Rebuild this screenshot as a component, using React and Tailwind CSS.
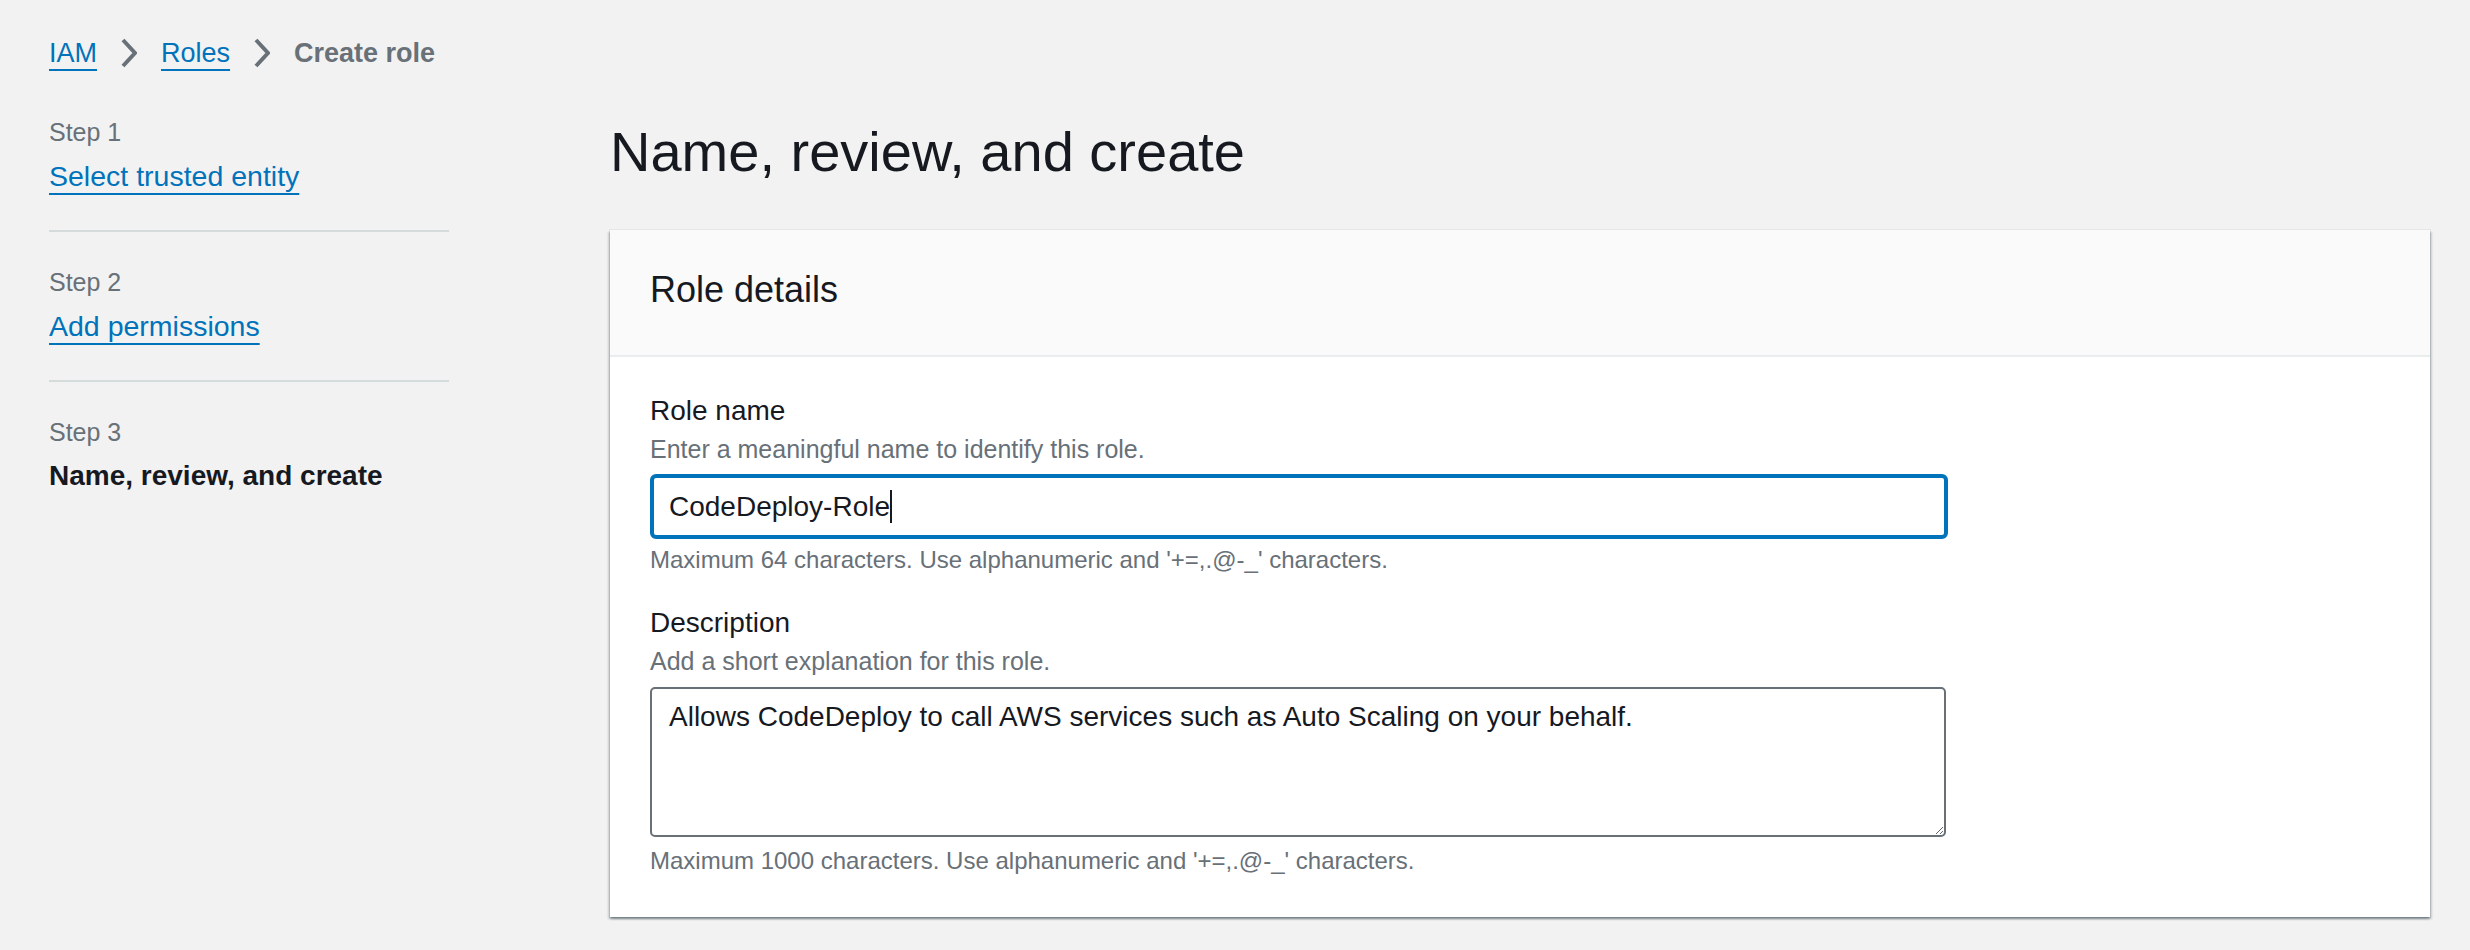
import React from 'react';

const Chevron = () => (
  <svg width="16" height="32" viewBox="0 0 16 32" className="shrink-0">
    <polyline points="2,3 14,16 2,29" fill="none" stroke="#687078" strokeWidth="4" />
  </svg>
);

const steps = [
  { label: 'Step 1', title: 'Select trusted entity', done: true },
  { label: 'Step 2', title: 'Add permissions', done: true },
  { label: 'Step 3', title: 'Name, review, and create', done: false },
];

const App = () => {
  return (
    <div className="min-h-screen bg-[#f2f2f2] font-['Liberation_Sans',Arial,sans-serif] text-[#16191f] pl-[49px] pr-[40px] pt-[33px] pb-[33px]">
      {/* Breadcrumb */}
      <nav className="flex items-center gap-[24px] h-[40px] text-[27px] leading-[40px]">
        <a className="text-[#0073bb] underline decoration-2 underline-offset-[7px]">IAM</a>
        <Chevron />
        <a className="text-[#0073bb] underline decoration-2 underline-offset-[7px]">Roles</a>
        <Chevron />
        <span className="text-[#687078] font-bold">Create role</span>
      </nav>

      <div className="flex mt-[43px]">
        {/* Steps */}
        <aside className="w-[400px] shrink-0">
          {steps.map((s, i) => (
            <div
              key={s.label}
              className={
                (i === 0 ? 'pb-[34px]' : 'pt-[34px] pb-[34px]') +
                (i < steps.length - 1 ? ' border-b-2 border-[#d5dbdb]' : '')
              }
            >
              <div className="text-[25px] leading-[32px] text-[#687078]">{s.label}</div>
              {s.done ? (
                <a className="block w-fit mt-[8px] text-[28.5px] leading-[40px] text-[#0073bb] underline decoration-2 underline-offset-[7px]">
                  {s.title}
                </a>
              ) : (
                <div className="mt-[8px] text-[28px] leading-[40px] font-bold">{s.title}</div>
              )}
            </div>
          ))}
        </aside>

        {/* Main */}
        <main className="ml-[161px] flex-1 min-w-0">
          <h1 className="text-[56px] leading-[72px] font-normal">Name, review, and create</h1>

          <section className="mt-[42px] bg-white shadow-[0_0_0_1px_rgba(0,28,36,0.05),0_2px_2px_0_rgba(0,28,36,0.3),2px_2px_2px_0_rgba(0,28,36,0.15),-2px_2px_2px_0_rgba(0,28,36,0.15)]">
            <div className="bg-[#fafafa] px-[40px] pt-[38px] pb-[43px] border-b-2 border-[#eaeded]">
              <h2 className="text-[36px] leading-[44px] font-normal">Role details</h2>
            </div>

            <div className="px-[40px] pt-[34px] pb-[40px]">
              <div className="text-[28px] leading-[40px]">Role name</div>
              <div className="mt-[2px] text-[25px] leading-[32px] text-[#687078]">
                Enter a meaningful name to identify this role.
              </div>
              <div className="mt-[9px] w-[1298px] h-[65px] border-4 border-[#0073bb] rounded-[6px] px-[15px] flex items-center text-[28px] leading-[40px]">
                <span>CodeDeploy-Role</span>
                <span className="inline-block w-[2px] h-[33px] bg-[#16191f]"></span>
              </div>
              <div className="mt-[5px] text-[24px] leading-[32px] text-[#687078]">
                Maximum 64 characters. Use alphanumeric and '+=,.@-_' characters.
              </div>

              <div className="mt-[27px] text-[28px] leading-[40px]">Description</div>
              <div className="mt-[2px] text-[25px] leading-[32px] text-[#687078]">
                Add a short explanation for this role.
              </div>
              <textarea
                readOnly
                defaultValue="Allows CodeDeploy to call AWS services such as Auto Scaling on your behalf."
                className="block mt-[10px] w-[1296px] h-[150px] border-2 border-[#687078] rounded-[5px] px-[17px] pt-[8px] text-[28px] leading-[40px] text-[#16191f] bg-white outline-none"
              />
              <div className="mt-[8px] text-[24px] leading-[32px] text-[#687078]">
                Maximum 1000 characters. Use alphanumeric and '+=,.@-_' characters.
              </div>
            </div>
          </section>
        </main>
      </div>
    </div>
  );
};

export default App;
